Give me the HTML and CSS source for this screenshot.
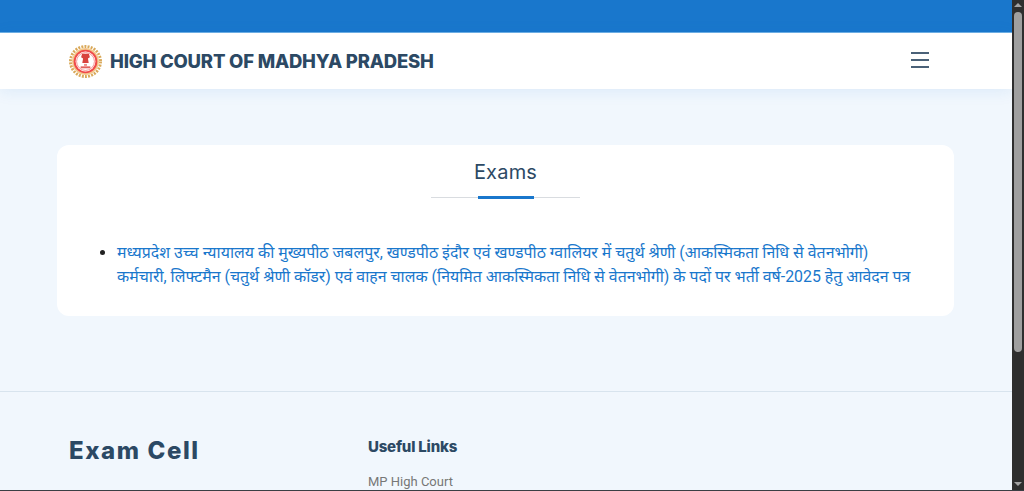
FILE: index.html
```html
<!DOCTYPE html>
<html lang="en">
<head>
    <meta charset="UTF-8">
    <meta name="viewport" content="width=device-width, initial-scale=1.0">
    <title>Exams</title>
    <link rel="stylesheet" href="styles.css">
</head>
<body>
<div class="window">
    <div class="page">
        <div class="top-strip"></div>
        <header class="navbar">
            <a class="brand" href="#">
                <svg class="brand-logo" viewBox="0 0 34 34" aria-hidden="true">
                    <circle cx="17" cy="17" r="15.500" fill="none" stroke="#d9a95a" stroke-width="3" stroke-dasharray="2 1.25"/>
                    <circle cx="17" cy="17" r="13.800" fill="#f3c98d"/>
                    <circle cx="17" cy="17" r="12.200" fill="#f04a4a"/>
                    <circle cx="17" cy="17" r="10.200" fill="#fff"/>
                    <circle cx="17" cy="17" r="9.200" fill="none" stroke="#f47c7c" stroke-width="0.800"/>
                    <path d="M13.500 9h7l1 3.500-2 1.500.8 4.500h-6.600l.8-4.500-2-1.500z" fill="#d8433f"/>
                    <path d="M15.500 19.500h3v2h-3z" fill="#ef8a86"/>
                    <path d="M12 22h10v2H12z" fill="#e2615d"/>
                </svg>
                <span class="brand-name">HIGH COURT OF MADHYA PRADESH</span>
            </a>
            <button class="nav-toggle" aria-label="Menu">
                <span></span><span></span><span></span>
            </button>
        </header>

        <main class="content">
            <section class="card">
                <h2 class="card-title">Exams</h2>
                <div class="title-rule"><span></span></div>
                <ul class="exam-list">
                    <li><a href="#">मध्यप्रदेश उच्च न्यायालय की मुख्यपीठ जबलपुर, खण्डपीठ इंदौर एवं खण्डपीठ ग्वालियर में चतुर्थ श्रेणी (आकस्मिकता निधि से वेतनभोगी) कर्मचारी, लिफ्टमैन (चतुर्थ श्रेणी कॉडर) एवं वाहन चालक (नियमित आकस्मिकता निधि से वेतनभोगी) के पदों पर भर्ती वर्ष-2025 हेतु आवेदन पत्र</a></li>
                </ul>
            </section>
        </main>

        <footer class="footer">
            <div class="footer-about">
                <h3 class="footer-logo">Exam Cell</h3>
            </div>
            <div class="footer-links">
                <h4>Useful Links</h4>
                <a href="#">MP High Court</a>
            </div>
        </footer>
    </div>
    <div class="scrollbar">
        <span class="arrow-up"></span>
        <span class="thumb"></span>
        <span class="arrow-down"></span>
    </div>
</div>
</body>
</html>
```

FILE: styles.css
```css
* {
    box-sizing: border-box;
}

html, body {
    height: 100%;
    margin: 0;
    overflow: hidden;
}

body {
    font-family: Roboto, "Noto Sans", "Liberation Sans", sans-serif;
    background: #f1f7fd;
}

.window {
    display: flex;
    height: 491px;
    border-bottom: 1px solid #3a3f44;
}

.page {
    flex: 1;
    min-width: 0;
    overflow: hidden;
}

.top-strip {
    height: 33px;
    background: #1977cc;
    border-bottom: 1px solid #6fb0e4;
}

.navbar {
    height: 56px;
    padding: 0 83px 0 69px;
    display: flex;
    align-items: center;
    justify-content: space-between;
    background: #fff;
    box-shadow: 0 2px 15px rgba(25, 119, 204, 0.1);
    position: relative;
}

.brand {
    display: flex;
    align-items: center;
    gap: 8px;
    text-decoration: none;
}

.brand-logo {
    width: 33px;
    height: 33px;
}

.brand-name {
    font-family: Inter, "Open Sans", sans-serif;
    font-size: 18.500px;
    font-weight: 800;
    letter-spacing: -0.2px;
    color: #2c4964;
}

.nav-toggle {
    width: 18px;
    margin-top: -2px;
    padding: 0;
    border: 0;
    background: none;
    display: flex;
    flex-direction: column;
    gap: 5px;
}

.nav-toggle span {
    height: 2px;
    background: #4a6178;
}

.content {
    padding: 56px 58px 75px 57px;
}

.card {
    height: 171px;
    padding: 15px 40px 0;
    background: #fff;
    border-radius: 12px;
}

.card-title {
    margin: 0;
    font-family: Inter, "Open Sans", sans-serif;
    font-size: 20px;
    font-weight: 400;
    letter-spacing: 0.2px;
    line-height: 24px;
    color: #2c4964;
    text-align: center;
}

.title-rule {
    width: 149px;
    height: 1px;
    margin: 13px auto 0;
    background: #d9dce0;
    display: flex;
    justify-content: center;
    align-items: center;
}

.title-rule span {
    width: 56px;
    height: 3px;
    background: #1977cc;
}

.exam-list {
    margin: 43px 0 0;
    padding: 0 0 0 20px;
    font-size: 15.900px;
    line-height: 24px;
    color: #222;
}

.exam-list a {
    color: #1977cc;
    text-decoration: none;
}

.footer {
    height: 100px;
    padding: 46px 0 0 69px;
    border-top: 1px solid #d8e4ee;
    display: flex;
}

.footer-about {
    width: 299px;
}

.footer-logo {
    margin: 0;
    font-family: Inter, "Open Sans", sans-serif;
    font-size: 24px;
    font-weight: 800;
    letter-spacing: 1.600px;
    line-height: 26px;
    color: #2c4964;
}

.footer-links h4 {
    margin: 0 0 15px;
    font-family: Inter, "Open Sans", sans-serif;
    font-size: 15px;
    font-weight: 800;
    letter-spacing: -0.2px;
    line-height: 18px;
    color: #2c4964;
}

.footer-links a {
    font-size: 13px;
    color: #777;
    text-decoration: none;
}

.scrollbar {
    width: 12px;
    background: #2e2e2e;
    display: flex;
    flex-direction: column;
    align-items: center;
    position: relative;
}

.arrow-up {
    margin-top: 3px;
    border: 4px solid transparent;
    border-top: 0;
    border-bottom: 4px solid #a3a3a3;
}

.thumb {
    width: 8px;
    height: 340px;
    margin-top: 5px;
    background: #9f9f9f;
    border-radius: 4px;
}

.arrow-down {
    position: absolute;
    bottom: 4px;
    border: 4px solid transparent;
    border-bottom: 0;
    border-top: 4px solid #a3a3a3;
}
```
